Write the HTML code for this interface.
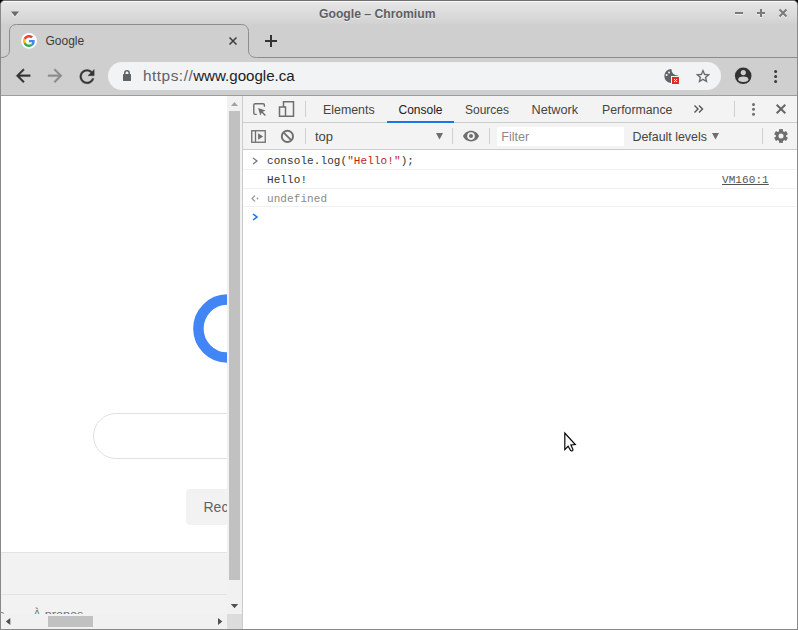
<!DOCTYPE html>
<html><head><meta charset="utf-8">
<style>
html,body{margin:0;padding:0;width:798px;height:630px;overflow:hidden;background:#000;}
*{box-sizing:border-box;}
.a{position:absolute;}
body{font-family:"Liberation Sans",sans-serif;position:relative;}
#win{left:0;top:0;width:798px;height:630px;background:#cfcfcf;border-radius:5px 5px 0 0;overflow:hidden;border:1px solid #898989;border-top-color:#6f6f6f;}
#title{left:0;top:0;width:796px;height:24px;background:linear-gradient(#e6e6e6,#d3d3d3 90%,#cfcfcf);border-top:1px solid #fafafa;}
#ttext{left:318px;top:5px;white-space:nowrap;font-weight:bold;font-size:12.2px;color:#5c5f66;text-shadow:0 1px 0 rgba(255,255,255,.6);}
#omni{left:108px;top:62px;width:613px;height:28px;border-radius:14px;background:#f1f3f4;}
#content{left:1px;top:95px;width:796px;height:534px;background:#fff;border-top:1px solid #9d9d9d;}
.t{white-space:nowrap;line-height:1;}
.dt{font-size:12px;color:#444;}
.mono{font-family:"Liberation Mono",monospace;font-size:11px;white-space:nowrap;line-height:1;letter-spacing:0.08px;}
</style></head><body>
<div id="win" class="a">
  <div id="title" class="a"><div id="ttext" class="a">Google – Chromium</div></div>
</div>
<div id="omni" class="a"></div>
<div class="a t" style="left:143px;top:68px;font-size:15.4px;color:#5f6368;"><span style="letter-spacing:0.5px">https://</span><span style="color:#202124;font-size:15.1px">www.google.ca</span></div>
<div class="a t" style="left:45.5px;top:35px;font-size:12px;color:#3c3c3c;">Google</div>

<!-- content -->
<div id="content" class="a">
  <!-- page area -->
  <div class="a" style="left:0;top:0;width:226px;height:518px;background:#fff;overflow:hidden;">
    <!-- G arc -->
    <svg class="a" style="left:0;top:0" width="226" height="518">
      <circle cx="226.4" cy="232.6" r="29" fill="none" stroke="#4285f4" stroke-width="10.5"/>
    </svg>
    <div class="a" style="left:92px;top:317px;width:300px;height:46px;border:1px solid #dfe1e5;border-radius:23px;"></div>
    <div class="a" style="left:185px;top:393px;width:140px;height:36px;background:#f2f2f2;border-radius:4px;"></div>
    <div class="a t" style="left:202.5px;top:404px;font-size:14px;color:#5f6368;">Recherche Google</div>
    <div class="a" style="left:0;top:456px;width:226px;height:62px;background:#f2f2f2;border-top:1px solid #e4e4e4;"></div>
    <div class="a" style="left:0;top:498px;width:226px;height:1px;background:#e4e4e4;"></div>
    <div class="a t" style="left:-3px;top:512px;font-size:13px;color:#70757a;">s</div>
    <div class="a t" style="left:31.8px;top:512.5px;font-size:12.6px;color:#70757a;">À propos</div>
  </div>
  <!-- horizontal scrollbar -->
  <div class="a" style="left:0;top:518px;width:226px;height:15px;background:#f1f1f1;"></div>
  <div class="a" style="left:47px;top:520px;width:45px;height:11px;background:#c1c1c1;"></div>
  <!-- vertical scrollbar -->
  <div class="a" style="left:226px;top:0;width:15px;height:518px;background:#f1f1f1;"></div>
  <div class="a" style="left:228px;top:15px;width:11px;height:469px;background:#c1c1c1;"></div>
  <div class="a" style="left:226px;top:518px;width:15px;height:15px;background:#dcdcdc;"></div>
  <!-- devtools border -->
  <div class="a" style="left:241px;top:0;width:1px;height:533px;background:#cbcbcb;"></div>
  <!-- devtools -->
  <div class="a" style="left:242px;top:0;width:554px;height:533px;background:#fff;">
    <div class="a" style="left:0;top:0;width:554px;height:27px;background:#f3f3f3;border-bottom:1px solid #cdcdcd;"></div>
    <div class="a" style="left:0;top:27px;width:554px;height:27px;background:#f3f3f3;border-bottom:1px solid #cdcdcd;"></div>
  </div>
</div>
<!-- devtools text (absolute page coords) -->
<div class="a t dt" style="left:323px;top:104px;font-size:12.4px">Elements</div>
<div class="a t dt" style="left:398.5px;top:104px;color:#202124">Console</div>
<div class="a t dt" style="left:465px;top:104px;">Sources</div>
<div class="a t dt" style="left:531.5px;top:104px;font-size:12.7px">Network</div>
<div class="a t dt" style="left:602px;top:104px;font-size:12.3px">Performance</div>
<div class="a" style="left:387px;top:121px;width:67px;height:2px;background:#1a73e8;"></div>
<div class="a t dt" style="left:315px;top:129.5px;font-size:13px">top</div>
<div class="a" style="left:497px;top:127px;width:127px;height:19px;background:#fff;"></div>
<div class="a t dt" style="left:501.3px;top:131px;color:#8a8a8a;font-size:12.6px">Filter</div>
<div class="a t dt" style="left:632.5px;top:131px;font-size:12.4px">Default levels</div>
<!-- console messages -->
<div class="a" style="left:243px;top:169px;width:553px;height:1px;background:#f0f0f0;"></div>
<div class="a" style="left:243px;top:188px;width:553px;height:1px;background:#f0f0f0;"></div>
<div class="a" style="left:243px;top:206px;width:553px;height:1px;background:#f0f0f0;"></div>
<div class="a mono" style="left:267px;top:156px;color:#333">console.log(<span style="color:#c41a16">"Hello!"</span>);</div>
<div class="a mono" style="left:267px;top:175px;color:#333">Hello!</div>
<div class="a mono" style="left:722px;top:175px;color:#555;text-decoration:underline">VM160:1</div>
<div class="a mono" style="left:267px;top:194px;color:#8a8a8a">undefined</div>
<div>
</div>

<svg class="a" style="left:0;top:0" width="798" height="630" viewBox="0 0 798 630">
  <!-- dropdown triangle -->
  <path d="M11 12.5 L19 12.5 L15 17.5 Z" fill="rgba(255,255,255,.7)"/>
  <path d="M11 11.5 L19 11.5 L15 16.5 Z" fill="#6a6a6a"/>
  <!-- window buttons -->
  <g stroke="rgba(255,255,255,.6)" stroke-width="2" fill="none" transform="translate(0,1)">
    <path d="M735 13 H743"/>
    <path d="M757 13 H765 M761 9 V17"/>
    <path d="M779.5 9.5 L786.5 16.5 M786.5 9.5 L779.5 16.5"/>
  </g>
  <g stroke="#7a7a7a" stroke-width="2" fill="none">
    <path d="M735 13 H743"/>
    <path d="M757 13 H765 M761 9 V17"/>
    <path d="M779.5 9.5 L786.5 16.5 M786.5 9.5 L779.5 16.5"/>
  </g>
  <!-- tab outline -->
  <path d="M1 57.5 C6 57.5 9.5 55 9.5 50 V31 C9.5 27 12.5 24.5 16.5 24.5 H241.5 C245.5 24.5 248.5 27.5 248.5 31.5 V50 C248.5 55 251.5 57.5 256.5 57.5 H797" fill="none" stroke="#8c8c8c" stroke-width="1"/>
  <!-- favicon -->
  <circle cx="29" cy="40.9" r="7.9" fill="#fff"/>
  <g transform="translate(23,35) scale(0.25)">
    <path fill="#EA4335" d="M24 9.5c3.54 0 6.71 1.220 9.21 3.6l6.85-6.85C35.9 2.38 30.470 0 24 0 14.62 0 6.51 5.38 2.56 13.22l7.980 6.19C12.43 13.72 17.74 9.5 24 9.5z"/>
    <path fill="#4285F4" d="M46.98 24.55c0-1.57-.15-3.09-.38-4.550H24v9.020h12.94c-.58 2.96-2.26 5.480-4.78 7.18l7.73 6c4.51-4.18 7.09-10.36 7.090-17.65z"/>
    <path fill="#FBBC05" d="M10.53 28.59c-.48-1.45-.76-2.99-.76-4.59s.27-3.14.76-4.59l-7.98-6.19C.92 16.46 0 20.12 0 24c0 3.88.92 7.54 2.56 10.78l7.97-6.19z"/>
    <path fill="#34A853" d="M24 48c6.48 0 11.93-2.13 15.89-5.81l-7.73-6c-2.15 1.45-4.92 2.3-8.16 2.3-6.26 0-11.57-4.22-13.47-9.91l-7.98 6.19C6.51 42.62 14.62 48 24 48z"/>
  </g>
  <!-- tab close -->
  <path d="M229.5 37.5 L236.5 44.5 M236.5 37.5 L229.5 44.5" stroke="#3c3c3c" stroke-width="1.5"/>
  <!-- new tab plus -->
  <path d="M265 41 H277 M271 35 V47" stroke="#333" stroke-width="2"/>
  <!-- back -->
  <path transform="translate(12.7,65.2) scale(0.875)" d="M20 11H7.83l5.59-5.59L12 4l-8 8 8 8 1.41-1.41L7.83 13H20v-2z" fill="#333" stroke="#333" stroke-width="0.45"/>
  <path transform="translate(44.6,65.2) scale(0.875)" d="M12 4l-1.41 1.41L16.17 11H4v2h12.17l-5.58 5.59L12 20l8-8z" fill="#8a8a8a" stroke="#8a8a8a" stroke-width="0.45"/>
  <!-- reload -->
  <path transform="translate(76.2,65.8) scale(0.9)" d="M17.65 6.35C16.2 4.9 14.21 4 12 4c-4.42 0-7.99 3.58-7.990 8s3.570 8 7.990 8c3.73 0 6.84-2.550 7.73-6h-2.08c-.82 2.33-3.04 4-5.650 4-3.310 0-6-2.69-6-6s2.69-6 6-6c1.66 0 3.140.69 4.220 1.78L13 11h7V4l-2.35 2.35z" fill="#333" stroke="#333" stroke-width="0.35"/>
  <!-- lock -->
  <rect x="123" y="74.1" width="8" height="6.8" rx="0.6" fill="#5f6368"/>
  <path d="M124.8 74.5 V73 A2.2 2.2 0 0 1 129.2 73 V74.5" stroke="#5f6368" stroke-width="1.5" fill="none"/>
  <!-- star -->
  <path transform="translate(694.54,67.8) scale(0.705)" d="M22 9.24l-7.19-.62L12 2 9.19 8.63 2 9.24l5.46 4.73L5.820 21 12 17.27 18.18 21l-1.63-7.03L22 9.24zM12 15.4l-3.76 2.27 1-4.28-3.32-2.88 4.38-.38L12 6.1l1.71 4.04 4.38.38-3.32 2.88 1 4.28L12 15.4z" fill="#5f6368" stroke="#5f6368" stroke-width="0.3"/>
  <!-- account -->
  <circle cx="743.2" cy="75.8" r="8.3" fill="#333"/>
  <circle cx="743.3" cy="72.6" r="2.6" fill="#cfcfcf"/>
  <ellipse cx="743.3" cy="79.2" rx="5" ry="2.8" fill="#cfcfcf"/>
  <!-- cookie -->
  <circle cx="671.3" cy="76" r="7" fill="#5f6368"/>
  <circle cx="677.5" cy="69.5" r="6" fill="#f1f3f4"/>
  <rect x="671" y="76" width="10" height="10" fill="#f1f3f4"/>
  <circle cx="669" cy="72.5" r="1" fill="#f1f3f4"/>
  <circle cx="666.6" cy="75" r="1" fill="#f1f3f4"/>
  <rect x="672" y="77" width="7" height="7" fill="#d93025"/>
  <path d="M674 79 L677 82 M677 79 L674 82" stroke="#fff" stroke-width="1"/>
  <!-- scrollbar arrows -->
  <path d="M231 106 H238 L234.5 102 Z" fill="#a3a3a3"/>
  <path d="M230.8 604 H238.2 L234.5 608.2 Z" fill="#505050"/>
  <path d="M10.3 617.9 V625.1 L5.8 621.5 Z" fill="#505050"/>
  <path d="M218 617.9 V625.1 L222.3 621.5 Z" fill="#505050"/>
  <!-- devtools icons -->
  <g fill="none" stroke="#6e6e6e" stroke-width="1.5">
    <path d="M256.8 114.4 H255.1 Q253.8 114.4 253.8 113.1 V105.1 Q253.8 103.8 255.1 103.8 H263.1 Q264.4 103.8 264.4 105.1 V106.7" stroke-width="1.4"/>
    <rect x="283.5" y="101.75" width="10" height="14.5"/>
    <rect x="279.5" y="107" width="6" height="9.25" fill="#f3f3f3"/>
    <rect x="251.75" y="130.75" width="13.5" height="11.5" stroke-width="1.3"/>
    <path d="M255.5 131 V142" stroke-width="1.3"/>
    <circle cx="287.4" cy="136.4" r="5.6" stroke-width="1.9"/>
    <path d="M283.4 132.4 L291.4 140.4" stroke-width="1.9"/>
  </g>
  <path d="M258.1 108.1 L265.6 110.4 L262.7 111.7 L265.9 114.9 L264.9 115.9 L261.7 112.7 L260.3 115.6 Z" fill="#6e6e6e"/>
  <path d="M258.1 133.2 L263.1 136.5 L258.1 139.8 Z" fill="#6e6e6e"/>
  <g fill="#d0d0d0">
    <rect x="305" y="101" width="1" height="16"/>
    <rect x="734" y="101" width="1" height="16"/>
    <rect x="305" y="128" width="1" height="16"/>
    <rect x="452" y="128" width="1" height="16"/>
    <rect x="489" y="128" width="1" height="16"/>
    <rect x="762" y="128" width="1" height="16"/>
  </g>
  <path d="M694.5 105.5 L698 109 L694.5 112.5 M699 105.5 L702.5 109 L699 112.5" stroke="#555" stroke-width="1.4" fill="none"/>
  <circle cx="753.5" cy="104.5" r="1.5" fill="#6e6e6e"/>
  <circle cx="753.5" cy="109.3" r="1.5" fill="#6e6e6e"/>
  <circle cx="753.5" cy="114.3" r="1.5" fill="#6e6e6e"/>
  <path d="M776.7 104.7 L785.3 113.3 M785.3 104.7 L776.7 113.3" stroke="#666" stroke-width="2"/>
  <path d="M436 133 H443 L439.5 139.5 Z" fill="#6e6e6e"/>
  <path d="M712 133 H719 L715.5 139.5 Z" fill="#6e6e6e"/>
  <path transform="translate(462.3,127.4) scale(0.727)" d="M12 4.5C7 4.5 2.73 7.61 1 12c1.73 4.39 6 7.5 11 7.5s9.27-3.11 11-7.5c-1.73-4.39-6-7.5-11-7.5z" fill="#6e6e6e"/>
  <circle cx="471" cy="136.1" r="3.8" fill="#f3f3f3"/>
  <circle cx="471" cy="136.1" r="2" fill="#6e6e6e"/>
  <g transform="translate(781,136)" fill="#6e6e6e">
    <circle r="5.2"/>
    <rect x="-1.9" y="-6.9" width="3.8" height="13.8"/>
    <rect x="-1.9" y="-6.9" width="3.8" height="13.8" transform="rotate(60)"/>
    <rect x="-1.9" y="-6.9" width="3.8" height="13.8" transform="rotate(120)"/>
    <circle r="2.5" fill="#f3f3f3"/>
  </g>
  <!-- console chevrons -->
  <path d="M253 158 L257 161 L253 164" stroke="#777" stroke-width="1.3" fill="none"/>
  <path d="M253 214 L257 217 L253 220" stroke="#1a73e8" stroke-width="1.5" fill="none"/>
  <path d="M255 195.5 L252 198.5 L255 201.5" stroke="#999" stroke-width="1.2" fill="none"/>
  <circle cx="257.5" cy="198.5" r="0.9" fill="#999"/>
  <!-- mouse cursor -->
  <path d="M564.8 433.1 V449.6 L568.1 446.3 L570.7 450.6 Q571.5 451.3 572.6 450.5 Q573.3 449.9 572.9 449.2 L570.9 444.9 L575.3 444.6 Z" fill="#f8f8f8" stroke="#000" stroke-width="1.15" stroke-linejoin="miter"/>
  <!-- kebab -->
  <circle cx="775.6" cy="71.4" r="1.5" fill="#3c3c3c"/>
  <circle cx="775.6" cy="76.4" r="1.5" fill="#3c3c3c"/>
  <circle cx="775.6" cy="81.4" r="1.5" fill="#3c3c3c"/>
</svg>
</body></html>
